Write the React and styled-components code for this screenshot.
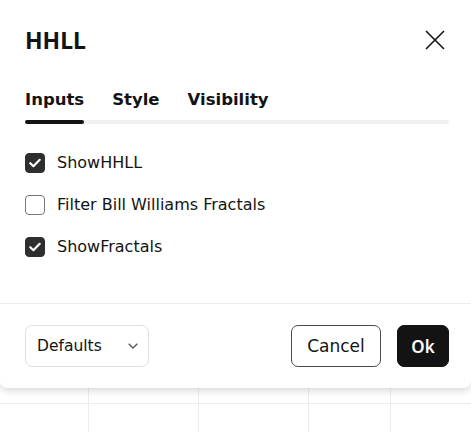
import React from "react";
import styled, { createGlobalStyle } from "styled-components";

const Global = createGlobalStyle`
  html, body { margin: 0; padding: 0; background: #fff; }
  body { font-family: "DejaVu Sans", sans-serif; color: #131313; }
  * { box-sizing: border-box; }
`;

const Page = styled.div`
  position: relative;
  width: 471px;
  height: 432px;
  overflow: hidden;
  background: #fff;
`;

const Grid = styled.div`
  position: absolute;
  inset: 0;
  background:
    linear-gradient(#ececec, #ececec) 0 403px / 100% 1px no-repeat,
    linear-gradient(#ececec, #ececec) 88px 0 / 1px 100% no-repeat,
    linear-gradient(#ececec, #ececec) 198px 0 / 1px 100% no-repeat,
    linear-gradient(#ececec, #ececec) 308px 0 / 1px 100% no-repeat,
    linear-gradient(#ececec, #ececec) 390px 0 / 1px 100% no-repeat;
`;

const Dialog = styled.div`
  position: relative;
  width: 471px;
  height: 388px;
  background: #fff;
  border-radius: 0 0 7px 7px;
  box-shadow: 0 2px 8px rgba(0, 0, 0, 0.18);
  display: flex;
  flex-direction: column;
`;

const Header = styled.div`
  display: flex;
  align-items: center;
  justify-content: space-between;
  padding: 0 22px 0 25px;
  height: 80px;
`;

const Title = styled.h1`
  margin: 0;
  font-family: "Noto Sans", sans-serif;
  font-size: 23px;
  font-weight: 700;
  line-height: 32px;
`;

const CloseBtn = styled.button`
  border: 0;
  background: none;
  padding: 0;
  width: 28px;
  height: 28px;
  display: flex;
  align-items: center;
  justify-content: center;
  color: #131313;
`;

const Tabs = styled.div`
  margin: 4px 22px 0 25px;
  position: relative;
  display: flex;
  gap: 28px;
  padding-bottom: 8px;
  &::after {
    content: "";
    position: absolute;
    left: 0;
    right: 0;
    bottom: 0;
    height: 4px;
    border-radius: 2px;
    background: #f0f0f0;
  }
`;

const Tab = styled.div`
  position: relative;
  font-size: 16.5px;
  font-weight: 700;
  line-height: 32px;
  z-index: 1;
  &::after {
    content: "";
    display: ${(p) => (p.$active ? "block" : "none")};
    position: absolute;
    left: 0;
    right: 0;
    bottom: -8px;
    height: 4px;
    border-radius: 2px;
    background: #131313;
  }
`;

const Body = styled.div`
  flex: 1;
  display: flex;
  flex-direction: column;
  gap: 22px;
  padding: 29px 25px 0;
  border-bottom: 1px solid #ececec;
`;

const Row = styled.label`
  display: flex;
  align-items: center;
  gap: 12px;
  font-size: 16px;
  line-height: 20px;
`;

const Box = styled.span`
  width: 20px;
  height: 20px;
  border-radius: 4px;
  display: flex;
  align-items: center;
  justify-content: center;
  background: ${(p) => (p.$checked ? "#2e2e2e" : "#fff")};
  border: 1px solid ${(p) => (p.$checked ? "#2e2e2e" : "#767676")};
`;

const Footer = styled.div`
  height: 84px;
  display: flex;
  align-items: center;
  padding: 0 22px 0 25px;
  gap: 16px;
`;

const Select = styled.div`
  width: 124px;
  height: 42px;
  border: 1px solid #e0e0e0;
  border-radius: 7px;
  display: flex;
  align-items: center;
  justify-content: space-between;
  padding: 0 10px 0 11px;
  font-size: 15.5px;
  margin-right: auto;
`;

const Button = styled.button`
  height: 42px;
  width: ${(p) => p.$w}px;
  padding: 0;
  border-radius: 7px;
  font-family: ${(p) => (p.$primary ? '"Noto Sans", sans-serif' : "inherit")};
  font-size: 17px;
  font-weight: ${(p) => (p.$primary ? 600 : 400)};
  background: ${(p) => (p.$primary ? "#131313" : "#fff")};
  color: ${(p) => (p.$primary ? "#fff" : "#131313")};
  border: 1px solid ${(p) => (p.$primary ? "#131313" : "#4a4a4a")};
`;

const Check = () => (
  <svg width="12" height="10" viewBox="0 0 12 10" fill="none">
    <path d="M1.3 5.2 L4.4 8.2 L10.7 1.8" stroke="#fff" strokeWidth="2.2" strokeLinecap="round" strokeLinejoin="round" />
  </svg>
);

const items = [
  { label: "ShowHHLL", checked: true },
  { label: "Filter Bill Williams Fractals", checked: false },
  { label: "ShowFractals", checked: true },
];

export default function App() {
  return (
    <Page>
      <Global />
      <Grid />
      <Dialog>
        <Header>
          <Title>HHLL</Title>
          <CloseBtn aria-label="Close">
            <svg width="20" height="20" viewBox="0 0 20 20">
              <path d="M1 1 L19 19 M19 1 L1 19" stroke="#131313" strokeWidth="1.6" />
            </svg>
          </CloseBtn>
        </Header>
        <Tabs>
          <Tab $active>Inputs</Tab>
          <Tab>Style</Tab>
          <Tab>Visibility</Tab>
        </Tabs>
        <Body>
          {items.map((it) => (
            <Row key={it.label}>
              <Box $checked={it.checked}>{it.checked && <Check />}</Box>
              {it.label}
            </Row>
          ))}
        </Body>
        <Footer>
          <Select>
            Defaults
            <svg width="10" height="6" viewBox="0 0 10 6">
              <path d="M0.7 0.7 L5 5 L9.3 0.7" stroke="#555" strokeWidth="1.3" fill="none" />
            </svg>
          </Select>
          <Button $w={90}>Cancel</Button>
          <Button $primary $w={52}>Ok</Button>
        </Footer>
      </Dialog>
    </Page>
  );
}
